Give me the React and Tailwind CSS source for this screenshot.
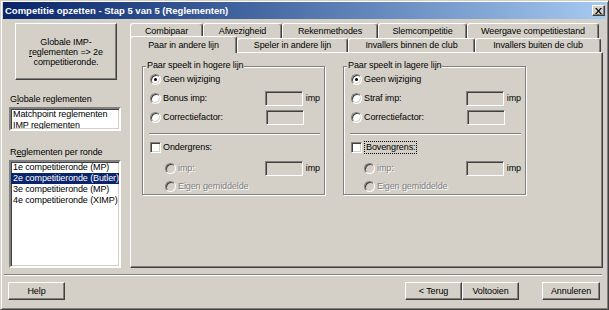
import React from "react";

const ROW1 = [
  { label: "Combipaar", w: "w-[73px]" },
  { label: "Afwezigheid", w: "w-[79px]" },
  { label: "Rekenmethodes", w: "w-[96px]" },
  { label: "Slemcompetitie", w: "w-[89px]" },
  { label: "Weergave competitiestand", w: "w-[132px]" },
];

const ROW2 = [
  { label: "Speler in andere lijn", w: "w-[111px]" },
  { label: "Invallers binnen de club", w: "w-[127px]" },
  { label: "Invallers buiten de club", w: "w-[126px]" },
];

const raised =
  "border border-t-white border-l-white border-r-[#404040] border-b-[#404040] shadow-[inset_-1px_-1px_0_#808080]";
const sunken =
  "border border-t-[#808080] border-l-[#808080] border-r-white border-b-white shadow-[inset_1px_1px_0_#404040,inset_-1px_-1px_0_#d4d0c8]";
const disabledText = "text-[#808080] [text-shadow:1px_1px_0_#fff]";

function Radio({ checked, disabled }) {
  return (
    <span
      className={`flex h-[11px] w-[11px] shrink-0 items-center justify-center rounded-full ${sunken} ${
        disabled ? "bg-[#d4d0c8]" : "bg-white"
      }`}
    >
      {checked && <span className="h-[3px] w-[3px] rounded-full bg-black" />}
    </span>
  );
}

function Checkbox() {
  return <span className={`block h-[11px] w-[11px] shrink-0 bg-white ${sunken}`} />;
}

function Edit() {
  return <span className={`block h-[15px] w-[38px] shrink-0 bg-[#d4d0c8] ${sunken}`} />;
}

function Tab({ label, w, h = "h-[15px]" }) {
  return (
    <div
      className={`${w} ${h} flex shrink-0 items-center justify-center rounded-t-[3px] border-t border-l border-r border-t-white border-l-white border-r-[#404040] shadow-[inset_-1px_0_0_#808080]`}
    >
      {label}
    </div>
  );
}

function Group({ title, indent, subW, upper, check }) {
  return (
    <div className="relative h-[129px] w-[183px] shrink-0 border border-[#808080] pl-[7px] pr-[4px] pt-[5px] shadow-[inset_1px_1px_0_#fff,1px_1px_0_#fff]">
      <span className="absolute -top-[7px] left-[3px] bg-[#d4d0c8] px-[1px] leading-[11px]">{title}</span>

      <div className="flex h-[15px] items-center">
        <Radio checked />
        <span className="ml-[2px]">Geen wijziging</span>
      </div>
      <div className="mt-[4px] flex h-[15px] items-center">
        <div className="flex w-[116px] items-center">
          <Radio />
          <span className="ml-[2px]">{upper}</span>
        </div>
        <Edit />
        <span className="ml-[3px]">imp</span>
      </div>
      <div className="mt-[4px] flex h-[15px] items-center">
        <div className="flex w-[116px] items-center">
          <Radio />
          <span className="ml-[2px]">Correctiefactor:</span>
        </div>
        <Edit />
      </div>

      <div className="-ml-[1px] mt-[8px] h-[2px] border-t border-t-[#808080] border-b border-b-white" />

      <div className="mt-[5px] flex h-[15px] items-center">
        <Checkbox />
        {check.focus ? (
          <span className="ml-[2px] border border-dotted border-black px-[1px] leading-[11px]">{check.label}</span>
        ) : (
          <span className="ml-[2px]">{check.label}</span>
        )}
      </div>
      <div className={`mt-[6px] flex h-[15px] items-center ${indent}`}>
        <div className={`flex ${subW} items-center`}>
          <Radio disabled />
          <span className={`ml-[2px] ${disabledText}`}>imp:</span>
        </div>
        <Edit />
        <span className="ml-[3px]">imp</span>
      </div>
      <div className={`mt-[3px] flex h-[15px] items-center ${indent}`}>
        <Radio disabled />
        <span className={`ml-[2px] ${disabledText}`}>Eigen gemiddelde</span>
      </div>
    </div>
  );
}

function Button({ children, w }) {
  return (
    <button className={`${w} flex h-[18px] items-center justify-center bg-[#d4d0c8] ${raised}`}>{children}</button>
  );
}

export default function App() {
  return (
    <div className="h-[310px] w-[609px] overflow-hidden bg-[#d4d0c8] font-['Liberation_Sans',Arial,sans-serif] text-[9px] leading-[11px] tracking-[-0.1px] text-black">
      <div className="flex h-full flex-col border border-t-[#d4d0c8] border-l-[#d4d0c8] border-r-[#404040] border-b-[#404040] px-[2px] pt-[1px] shadow-[inset_1px_1px_0_#fff,inset_-1px_-1px_0_#808080]">
        {/* Title bar */}
        <div className="flex h-[17px] shrink-0 items-center justify-between bg-gradient-to-r from-[#0a246a] to-[#a6caf0] pl-[2px] pr-[1px]">
          <span className="text-[9.5px] font-bold tracking-normal text-white">
            Competitie opzetten - Stap 5 van 5 (Reglementen)
          </span>
          <span className={`flex h-[11px] w-[13px] items-center justify-center bg-[#d4d0c8] ${raised}`}>
            <svg width="7" height="6" viewBox="0 0 7 6">
              <path d="M0 0h1.6L3.5 2.2 5.4 0H7L4.3 3 7 6H5.4L3.5 3.8 1.6 6H0l2.7-3z" fill="#000" />
            </svg>
          </span>
        </div>

        {/* Main area */}
        <div className="flex">
          {/* Left column */}
          <div className="ml-[6px] flex w-[112px] shrink-0 flex-col">
            <button
              className={`ml-[6px] mt-[4px] flex h-[57px] w-[102px] flex-col items-center justify-center bg-[#d4d0c8] leading-[10px] ${raised}`}
            >
              <span>Globale IMP-</span>
              <span>
                <u>r</u>eglementen =&gt; 2e
              </span>
              <span>competitieronde.</span>
            </button>

            <div className="ml-[1px] mt-[14px]">
              G<u>l</u>obale reglementen
            </div>
            <div className={`mt-[2px] h-[24px] overflow-hidden bg-white pl-[2px] ${sunken} border-2`}>
              <div>Matchpoint reglementen</div>
              <div>IMP reglementen</div>
            </div>

            <div className="ml-[1px] mt-[16px]">
              R<u>e</u>glementen per ronde
            </div>
            <div className={`mt-[2px] h-[108px] overflow-hidden bg-white ${sunken} border-2`}>
              <div className="pl-[2px]">1e competitieronde (MP)</div>
              <div className="bg-[#0a246a] pl-[2px] text-white">2e competitieronde (Butler)</div>
              <div className="pl-[2px]">3e competitieronde (MP)</div>
              <div className="pl-[2px]">4e competitieronde (XIMP)</div>
            </div>
          </div>

          {/* Tab control */}
          <div className="ml-[9px] mt-[4px] flex w-[473px] shrink-0 flex-col">
            <div className="flex">
              {ROW1.map((t) => (
                <Tab key={t.label} label={t.label} w={t.w} />
              ))}
            </div>
            <div className="flex">
              <div className="relative z-10 -mt-[2px] -mb-[1px] flex h-[17px] w-[107px] shrink-0 items-center justify-center rounded-t-[3px] border-t border-l border-r border-t-white border-l-white border-r-[#404040] bg-[#d4d0c8] shadow-[inset_-1px_0_0_#808080]">
                Paar in andere lijn
              </div>
              {ROW2.map((t) => (
                <Tab key={t.label} label={t.label} w={t.w} h="h-[14px]" />
              ))}
            </div>
            <div className={`flex h-[216px] gap-[18px] pl-[11px] pt-[13px] ${raised}`}>
              <Group
                title="Paar speelt in hogere lijn"
                upper="Bonus imp:"
                indent="pl-[15px]"
                subW="w-[101px]"
                check={{ label: "Ondergrens:" }}
              />
              <Group
                title="Paar speelt in lagere lijn"
                upper="Straf imp:"
                indent="pl-[13px]"
                subW="w-[103px]"
                check={{ label: "Bovengrens:", focus: true }}
              />
            </div>
          </div>
        </div>

        {/* Separator */}
        <div className="ml-[1px] mr-[4px] mt-[6px] h-[2px] border-t border-t-[#808080] border-b border-b-white" />

        {/* Buttons */}
        <div className="mt-[6px] flex">
          <div className="ml-[5px]">
            <Button w="w-[57px]">Help</Button>
          </div>
          <div className="ml-[340px] flex">
            <Button w="w-[57px]">&lt; Terug</Button>
            <Button w="w-[57px]">Voltooien</Button>
          </div>
          <div className="ml-[23px]">
            <Button w="w-[58px]">Annuleren</Button>
          </div>
        </div>
      </div>
    </div>
  );
}
